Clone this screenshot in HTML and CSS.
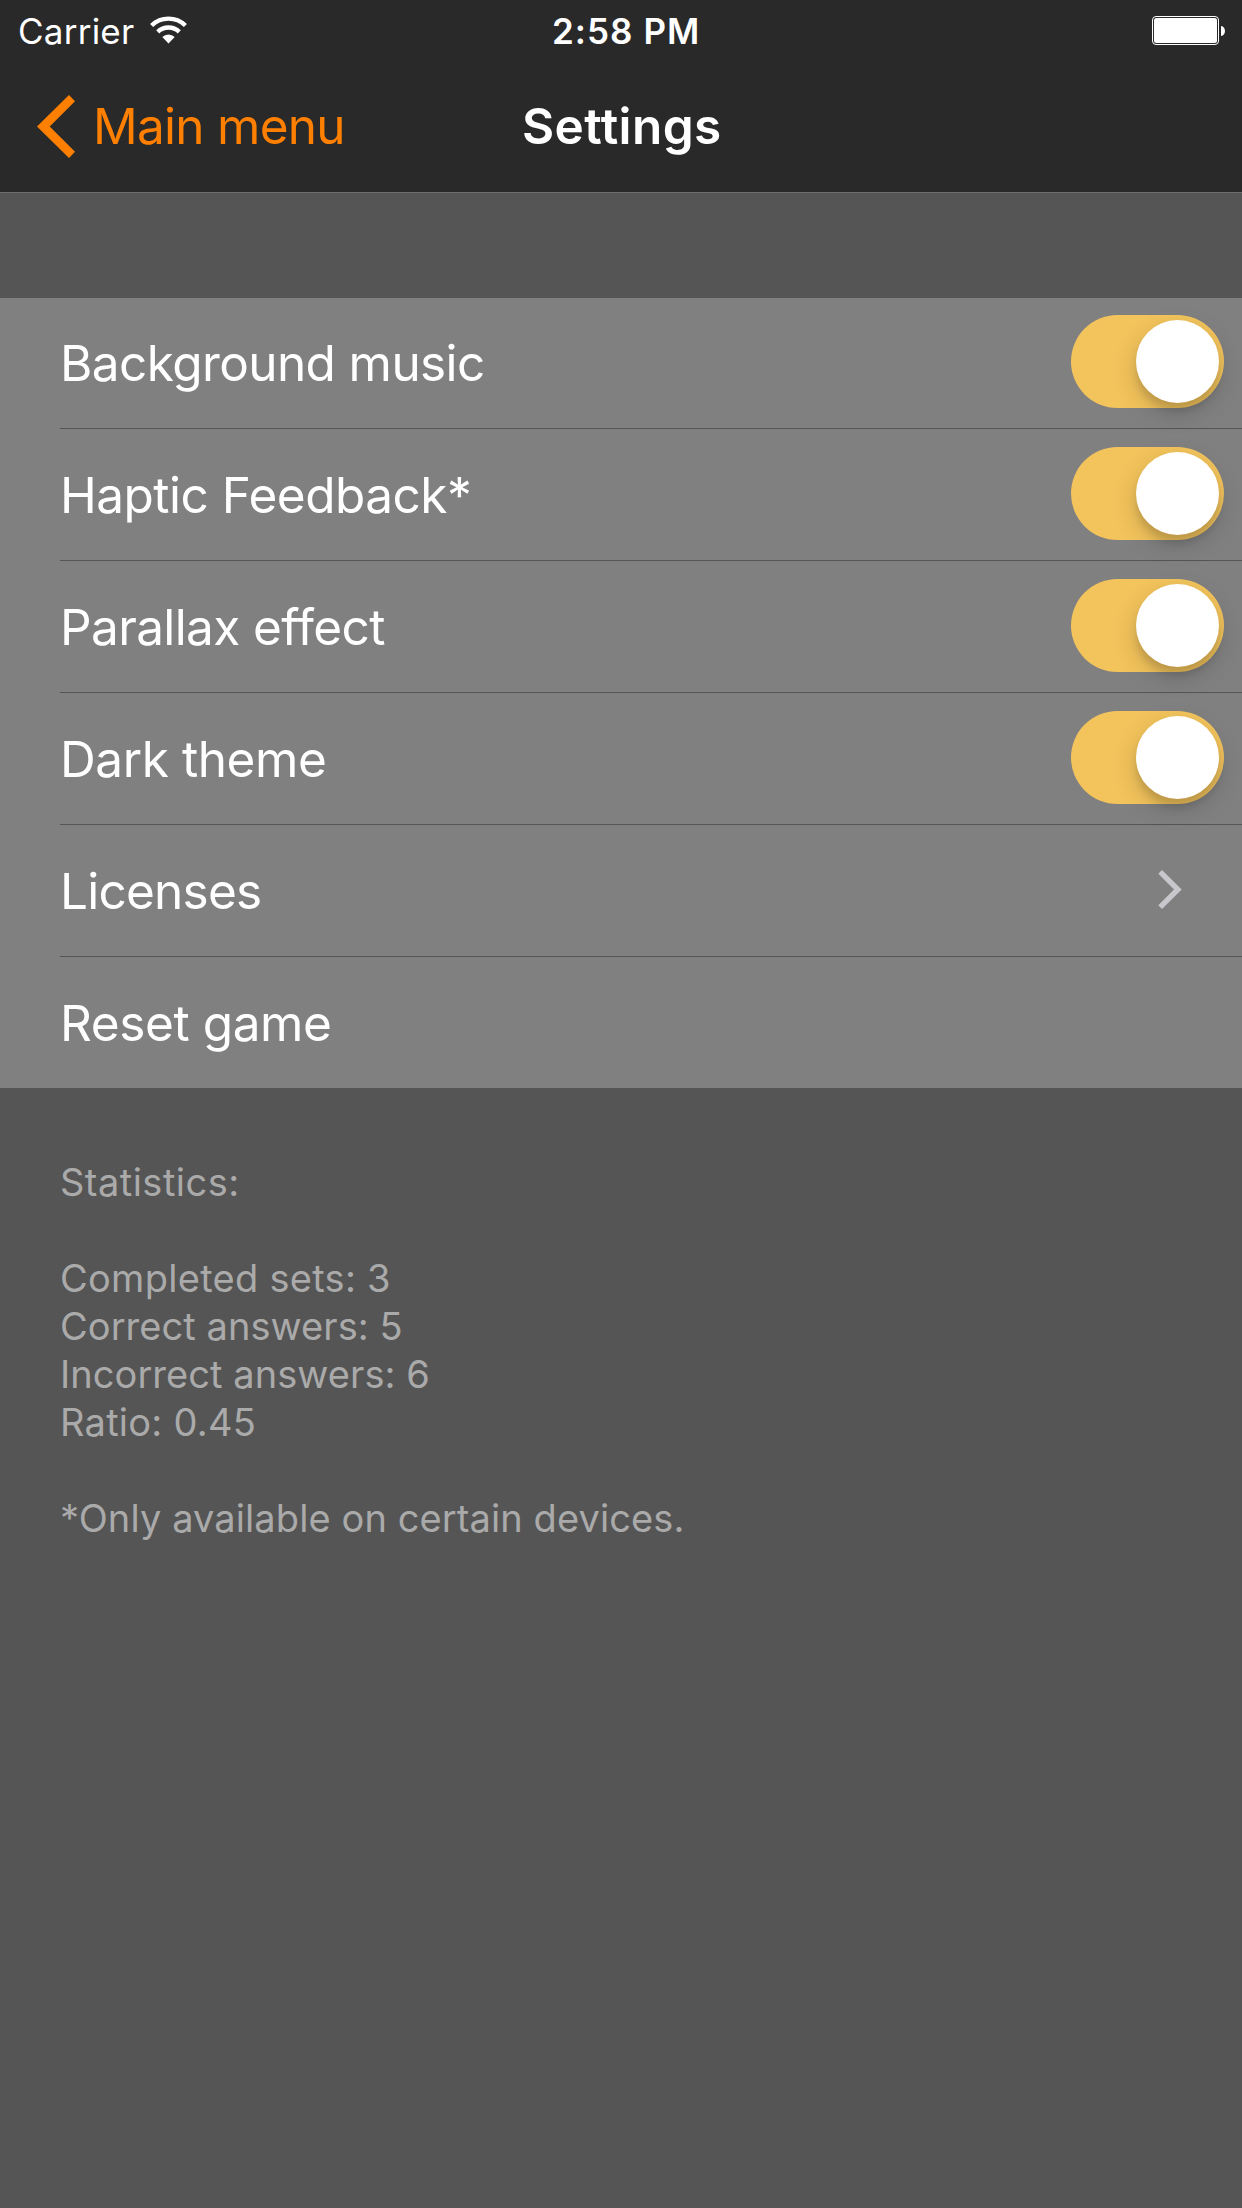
FILE: index.html
```html
<!DOCTYPE html>
<html lang="en">
<head>
<meta charset="utf-8">
<title>Settings</title>
<link rel="stylesheet" href="styles.css">
</head>
<body>
<header class="header">
  <div class="status">
    <div class="status-left">
      <span class="carrier">Carrier</span>
      <svg class="wifi" width="39" height="28" viewBox="-19.5 -27 39 28">
        <path d="M-16.9 -17.5A24.3 24.3 0 0 1 16.9 -17.5M-10.8 -11.2A15.6 15.6 0 0 1 10.8 -11.2" fill="none" stroke="#fff" stroke-width="4.4"/>
        <path d="M0 .4L-6.2 -6A8.8 8.8 0 0 1 6.2 -6Z" fill="#fff"/>
      </svg>
    </div>
    <span class="time">2:58 PM</span>
    <svg class="battery" width="73" height="29" viewBox="0 0 73 29">
      <rect x=".5" y=".5" width="66" height="28" rx="3.5" fill="none" stroke="#fff"/>
      <rect x="2" y="2" width="63" height="25" rx="2.5" fill="#fff"/>
      <path d="M69 10C74.3 10.5 74.3 19.5 69 20Z" fill="#fff"/>
    </svg>
  </div>
  <nav class="nav">
    <a class="back">
      <svg class="back-icon" width="38" height="63" viewBox="0 0 38 63">
        <path d="M32 0L38 6.2L12.7 31.5L38 56.8L32 63L0 31.5Z" fill="#ff8000"/>
      </svg>
      <span class="back-label">Main menu</span>
    </a>
    <h1 class="title">Settings</h1>
  </nav>
</header>
<main>
  <ul class="list">
    <li class="row"><span class="label">Background music</span><span class="switch"><span class="knob"></span></span></li>
    <li class="row"><span class="label label-haptic">Haptic Feedback*</span><span class="switch"><span class="knob"></span></span></li>
    <li class="row"><span class="label label-parallax">Parallax effect</span><span class="switch"><span class="knob"></span></span></li>
    <li class="row"><span class="label label-theme">Dark theme</span><span class="switch"><span class="knob"></span></span></li>
    <li class="row"><span class="label label-licenses">Licenses</span>
      <svg class="disclosure" width="24" height="40" viewBox="0 0 24 40">
        <path d="M4 0L.3 3.7L16 19.5L.3 35.3L4 39L23.7 19.5Z" fill="#c7c7cc"/>
      </svg>
    </li>
    <li class="row"><span class="label label-reset">Reset game</span></li>
  </ul>
  <section class="footer">
    <p class="statistics">Statistics:</p>
    <div class="figures">
      <p class="completed">Completed sets: 3</p>
      <p class="correct">Correct answers: 5</p>
      <p class="incorrect">Incorrect answers: 6</p>
      <p class="ratio">Ratio: 0.45</p>
    </div>
    <p class="note">*Only available on certain devices.</p>
  </section>
</main>
</body>
</html>
```
FILE: styles.css
```css
* { box-sizing: border-box; }

body {
  margin: 0;
  min-height: 2208px;
  background: #555;
  color: #fff;
  font-family: "Inter", "Liberation Sans", sans-serif;
}

p, h1, ul { margin: 0; padding: 0; }
svg { display: block; flex: none; }

.header {
  height: 193px;
  background: #292929;
  border-bottom: 1px solid #6e6e6e;
}

.status {
  display: grid;
  grid-template-columns: 552px 1fr auto;
  height: 62px;
  padding-right: 17px;
  font-size: 35px;
  line-height: 62px;
}
.status-left { display: flex; padding-left: 18px; }
.carrier { width: 131px; letter-spacing: .24px; }
.wifi { margin-top: 16px; }
.time { font-weight: 600; letter-spacing: 1.04px; }
.battery { margin-top: 16px; }

.nav {
  display: grid;
  grid-template-columns: 522px 1fr;
  height: 130px;
  font-size: 49.5px;
  line-height: 128px;
}
.back { display: flex; gap: 18px; padding-left: 37px; color: #ff8000; }
.back-icon { margin-top: 33px; }
.back-label { letter-spacing: -.72px; }
.title { font-size: inherit; font-weight: 600; letter-spacing: .42px; }

.list {
  margin-top: 105px;
  padding-left: 60px;
  background: #808080;
  list-style: none;
}
.row {
  display: flex;
  justify-content: space-between;
  align-items: flex-end;
  height: 132px;
  border-bottom: 1px solid #555;
}
.row:first-child { height: 131px; }
.row:last-child { height: 131px; border-bottom: 0; }

.label { font-size: 49.5px; line-height: 130px; letter-spacing: -.59px; }
.label-haptic { letter-spacing: -.51px; }
.label-parallax { letter-spacing: -.62px; font-feature-settings: "calt" 0, "liga" 0; }
.label-theme { letter-spacing: -.41px; }
.label-licenses { letter-spacing: -.76px; }
.label-reset { letter-spacing: -.4px; }

.switch {
  display: flex;
  justify-content: flex-end;
  width: 153px;
  height: 93px;
  margin: 0 18px 20px 0;
  padding: 5px;
  border-radius: 47px;
  background: #f3c45c;
}
.knob {
  width: 83px;
  height: 83px;
  border-radius: 50%;
  background: #fff;
  box-shadow: 0 9px 24px rgba(0, 0, 0, .18), 0 8px 7px rgba(0, 0, 0, .1);
}
.disclosure { margin: 0 60px 46px 0; }

.footer {
  display: grid;
  gap: 48px;
  padding: 70px 60px 0;
  color: #aaa;
  font-size: 38px;
  line-height: 48px;
}
.statistics { letter-spacing: .48px; }
.completed { letter-spacing: .28px; }
.correct { letter-spacing: .06px; }
.incorrect { letter-spacing: .06px; }
.ratio { letter-spacing: .26px; }
.note { letter-spacing: .1px; }
```
